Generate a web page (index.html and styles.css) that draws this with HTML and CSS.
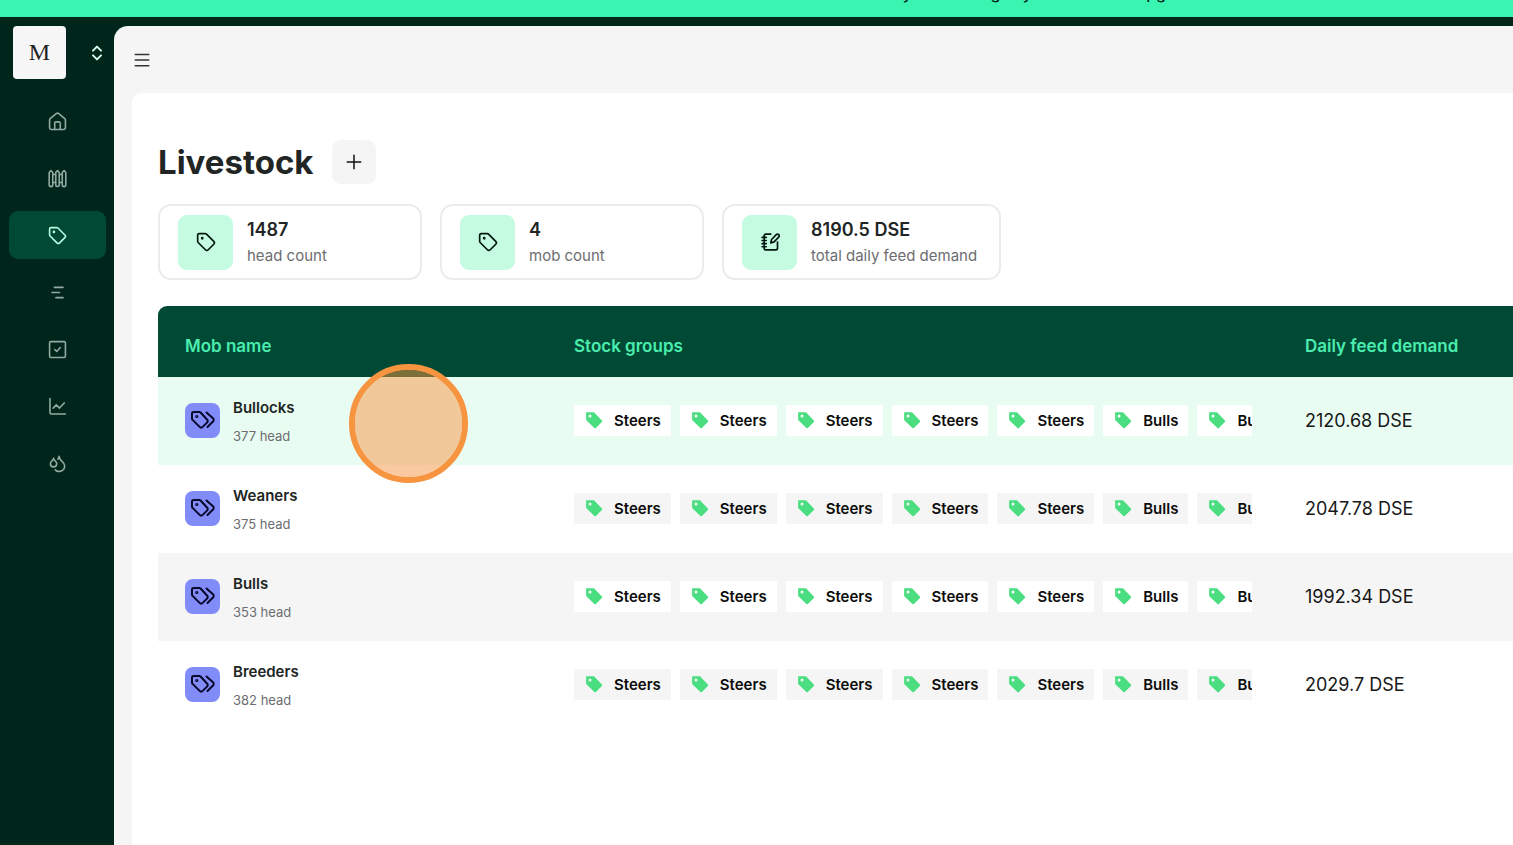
FILE: index.html
```html
<!DOCTYPE html>
<html lang="en">
<head>
<meta charset="utf-8">
<meta name="viewport" content="width=device-width, initial-scale=1">
<title>Livestock</title>
<link rel="stylesheet" href="styles.css">
</head>
<body>
<svg class="sprite" aria-hidden="true">
  <symbol id="i-home" viewBox="0 0 24 24"><path d="M2 10a2 2 0 0 1 .8-1.600l8-6.600a2 2 0 0 1 2.400 0l8 6.600a2 2 0 0 1 .8 1.600V20a2 2 0 0 1-2 2H4a2 2 0 0 1-2-2z"/><path d="M8.500 22v-8a1.500 1.500 0 0 1 1.500-1.500h4a1.500 1.500 0 0 1 1.500 1.500v8"/></symbol>
  <symbol id="i-fence" viewBox="0 0 24 24"><path d="M1.500 4.500L3.700 2 6 4.500V20a2 2 0 0 1-4.500 0zM9.800 4.500L12 2l2.200 2.500V20a2 2 0 0 1-4.400 0zM18 4.500L20.300 2l2.200 2.500V20a2 2 0 0 1-4.500 0zM6 7h3.800M14.200 7H18M6 17h3.800M14.200 17H18"/></symbol>
  <symbol id="i-tag" viewBox="0 0 24 24"><path d="M12.586 2.586A2 2 0 0 0 11.172 2H4a2 2 0 0 0-2 2v7.172a2 2 0 0 0 .586 1.414l8.704 8.704a2.426 2.426 0 0 0 3.420 0l6.580-6.580a2.426 2.426 0 0 0 0-3.420z"/><circle cx="7.500" cy="7.500" r=".7"/></symbol>
  <symbol id="i-tags" viewBox="0 0 26 26"><path d="M10.600 5.500A2 2 0 0 0 9.200 5H3.500A1.500 1.500 0 0 0 2 6.500v5a2 2 0 0 0 .6 1.400l7 7a2.200 2.200 0 0 0 3.100 0l4.300-4.300a2.200 2.200 0 0 0 0-3.100zM16.500 5.500l6.500 5.800a2.200 2.200 0 0 1 0 3.200l-5.500 5.500"/><circle cx="6.800" cy="9.500" r=".6"/></symbol>
  <symbol id="i-tag-solid" viewBox="0 0 24 24"><path fill-rule="evenodd" d="M1.500 1.500H12L22.500 12.500a1.500 1.500 0 0 1 0 2L14.500 22.500a1.500 1.500 0 0 1-2 0L1.500 12zM6.700 4.800a2 2 0 1 0 0 4 2 2 0 0 0 0-4z"/></symbol>
  <symbol id="i-gantt" viewBox="0 0 24 24"><path d="M8 5.500h11M5 12h9.500M10 18.500h9"/></symbol>
  <symbol id="i-check" viewBox="0 0 24 24"><rect x="2" y="2" width="20" height="20" rx="1.500"/><path d="M8.500 12l2.500 2.500 4.500-5"/></symbol>
  <symbol id="i-chart" viewBox="0 0 24 24"><path d="M2.500 2v18a1.500 1.500 0 0 0 1.500 1.500h18M6.500 14l4-4 4 4 6-6.500"/></symbol>
  <symbol id="i-drops" viewBox="0 0 24 24"><path d="M7 16.300c2.200 0 4-1.830 4-4.050 0-1.160-.57-2.260-1.710-3.190S7.290 6.750 7 5.300c-.290 1.450-1.140 2.840-2.290 3.760S3 11.100 3 12.250c0 2.220 1.800 4.050 4 4.050z"/><path d="M12.560 6.600A10.970 10.970 0 0 0 14 3.020c.5 2.500 2 4.900 4 6.500s3 3.500 3 5.500a6.980 6.980 0 0 1-11.910 4.970"/></symbol>
  <symbol id="i-notebook" viewBox="0 0 24 24"><path d="M13 2.500H7a2 2 0 0 0-2 2v15a2 2 0 0 0 2 2h12a2 2 0 0 0 2-2V12M2.500 6.500h5M2.500 10.200h5M2.500 14h5M2.500 17.700h5"/><path d="M19.500 3.200a2 2 0 0 1 2.900 2.900l-5.500 5.700-4 1.200 1-4z"/></symbol>
  <symbol id="i-sort" viewBox="0 0 24 24"><path d="M6 8.500l6-6 6 6M6 15.500l6 6 6-6"/></symbol>
  <symbol id="i-menu" viewBox="0 0 24 24"><path d="M3 4.500h18M3 12h18M3 19.500h18"/></symbol>
  <symbol id="i-plus" viewBox="0 0 24 24"><path d="M12 3v18M3 12h18"/></symbol>
</svg>

<div class="banner">You have 14 days remaining in your free trial. Upgrade now</div>

<div class="app">
  <aside class="sidebar">
    <button class="switcher" type="button" aria-label="Switch farm">
      <span class="avatar">M</span>
      <svg class="icon sort"><use href="#i-sort"/></svg>
    </button>
    <nav class="nav" aria-label="Main">
      <a href="#home" aria-label="Home"><svg class="icon"><use href="#i-home"/></svg></a>
      <a href="#paddocks" aria-label="Paddocks"><svg class="icon"><use href="#i-fence"/></svg></a>
      <a class="active" href="#livestock" aria-label="Livestock" aria-current="page"><svg class="icon"><use href="#i-tag"/></svg></a>
      <a href="#planner" aria-label="Planner"><svg class="icon"><use href="#i-gantt"/></svg></a>
      <a href="#tasks" aria-label="Tasks"><svg class="icon"><use href="#i-check"/></svg></a>
      <a href="#reports" aria-label="Reports"><svg class="icon"><use href="#i-chart"/></svg></a>
      <a href="#rainfall" aria-label="Rainfall"><svg class="icon"><use href="#i-drops"/></svg></a>
    </nav>
  </aside>

  <div class="shell">
    <header class="topbar">
      <button class="menu" type="button" aria-label="Toggle menu"><svg class="icon"><use href="#i-menu"/></svg></button>
    </header>
    <main class="panel">
      <div class="heading">
        <h1>Livestock</h1>
        <button class="add" type="button" aria-label="Add mob"><svg class="icon"><use href="#i-plus"/></svg></button>
      </div>

      <section class="stats" aria-label="Summary">
        <div class="stat">
          <span class="stat-icon"><svg class="icon"><use href="#i-tag"/></svg></span>
          <div><strong>1487</strong><span>head count</span></div>
        </div>
        <div class="stat">
          <span class="stat-icon"><svg class="icon"><use href="#i-tag"/></svg></span>
          <div><strong>4</strong><span>mob count</span></div>
        </div>
        <div class="stat">
          <span class="stat-icon"><svg class="icon"><use href="#i-notebook"/></svg></span>
          <div><strong>8190.5 DSE</strong><span>total daily feed demand</span></div>
        </div>
      </section>

      <table class="mobs">
        <colgroup><col class="col-name"><col class="col-groups"><col></colgroup>
        <thead>
          <tr><th scope="col">Mob name</th><th scope="col">Stock groups</th><th scope="col">Daily feed demand</th></tr>
        </thead>
        <tbody id="mob-rows"></tbody>
      </table>
      <span class="pointer" aria-hidden="true"></span>
    </main>
  </div>
</div>
<script src="app.js"></script>
</body>
</html>
```
FILE: app.js
```js
const groups = ["Steers", "Steers", "Steers", "Steers", "Steers", "Bulls", "Bulls"];
const mobs = [
  { name: "Bullocks", head: 377, demand: "2120.68", hover: true },
  { name: "Weaners", head: 375, demand: "2047.78" },
  { name: "Bulls", head: 353, demand: "1992.34" },
  { name: "Breeders", head: 382, demand: "2029.7" }
];

const chips = groups
  .map(g => `<li class="chip"><svg><use href="#i-tag-solid"/></svg>${g}</li>`)
  .join("");

document.getElementById("mob-rows").innerHTML = mobs.map(m => `
  <tr${m.hover ? ' class="highlight"' : ""}>
    <td><div class="mob">
      <span class="mob-icon"><svg class="icon"><use href="#i-tags"/></svg></span>
      <div><strong>${m.name}</strong><span>${m.head} head</span></div>
    </div></td>
    <td><ul class="chips">${chips}</ul></td>
    <td class="demand">${m.demand} DSE</td>
  </tr>`).join("");
```
FILE: styles.css
```css
* { box-sizing: border-box; }

body {
  margin: 0;
  min-height: 100vh;
  display: flex;
  flex-direction: column;
  overflow: hidden;
  background: #00261b;
  color: #212524;
  font-family: Inter, "Liberation Sans", sans-serif;
}

button {
  border: 0;
  padding: 0;
  background: none;
  color: inherit;
  font: inherit;
  cursor: pointer;
}

.sprite { display: none; }

.icon {
  display: block;
  width: 20px;
  height: 20px;
  fill: none;
  stroke: currentColor;
  stroke-width: 2;
  stroke-linecap: round;
  stroke-linejoin: round;
}

.banner {
  display: flex;
  flex: none;
  align-items: flex-end;
  justify-content: flex-end;
  height: 17px;
  padding: 0 276px 14px 0;
  overflow: hidden;
  background: #3af5b1;
  color: #00261b;
  font-size: 16px;
  font-weight: 500;
  line-height: 20px;
  white-space: nowrap;
}

.app {
  display: flex;
  flex: 1;
  padding-top: 9px;
}

.sidebar {
  flex: none;
  width: 114px;
  padding: 0 8px 0 9px;
}

.switcher {
  display: flex;
  align-items: center;
  justify-content: space-between;
  width: 100%;
  padding: 0 1px 0 4px;
  color: #d9fbec;
}

.avatar {
  display: grid;
  place-items: center;
  width: 53px;
  height: 53px;
  border-radius: 4px;
  background: #f6f6f6;
  color: #212121;
  font-family: "Liberation Serif", serif;
  font-size: 24px;
}

.sort { width: 16px; height: 16px; stroke-width: 3; }

.nav {
  display: flex;
  flex-direction: column;
  justify-content: space-between;
  height: 391px;
  margin-top: 18px;
}

.nav a {
  display: grid;
  place-items: center;
  height: 48px;
  border-radius: 9px;
  color: #93aaa2;
}

.nav .icon { width: 19px; height: 19px; }

.nav .active {
  background: #004a35;
  color: #b9fbe0;
}

.shell {
  display: flex;
  flex: 1;
  flex-direction: column;
  min-width: 0;
  border-top-left-radius: 14px;
  background: #f5f5f5;
}

.topbar {
  display: flex;
  align-items: center;
  height: 67px;
  padding-left: 19px;
}

.menu .icon { width: 18px; height: 18px; color: #303432; }

.panel {
  position: relative;
  flex: 1;
  margin-left: 18px;
  padding: 47px 0 0 26px;
  border-top-left-radius: 9px;
  background: #fff;
}

.heading {
  display: flex;
  align-items: center;
  gap: 18px;
}

h1 {
  margin: 0;
  font-size: 33px;
  font-weight: 700;
  line-height: 44px;
}

.add {
  display: grid;
  place-items: center;
  width: 44px;
  height: 44px;
  border-radius: 9px;
  background: #f5f5f5;
  color: #111;
}

.add .icon { width: 18px; height: 18px; }

.stats {
  display: flex;
  gap: 18px;
  margin: 20px 0 26px;
}

.stat {
  display: flex;
  align-items: center;
  gap: 14px;
  min-width: 264px;
  height: 76px;
  padding: 0 22px 0 18px;
  border: 2px solid #ebebeb;
  border-radius: 13px;
}

.stat-icon {
  display: grid;
  place-items: center;
  width: 55px;
  height: 55px;
  border-radius: 9px;
  background: #c5fbe1;
  color: #00170f;
}

.stat-icon + div { padding-top: 2px; }

.stat strong, .stat div span {
  display: block;
  line-height: 26px;
}

.stat strong { font-size: 18px; font-weight: 600; }
.stat div span { color: #6d6d70; font-size: 15px; }

.mobs {
  width: 100%;
  table-layout: fixed;
  border-collapse: collapse;
}

.col-name { width: 389px; }
.col-groups { width: 731px; }

th {
  height: 71px;
  padding: 8px 27px 0;
  background: #004a35;
  color: #4aedae;
  font-size: 17px;
  font-weight: 600;
  text-align: left;
  white-space: nowrap;
}

th:first-child { border-top-left-radius: 9px; }

td {
  height: 88px;
  padding: 0 26px 2px 27px;
}

tbody tr:nth-child(odd) { background: #f5f5f5; }
tbody .highlight:nth-child(odd) { background: #e9fcf2; }

.mob {
  display: flex;
  align-items: center;
  gap: 13px;
}

.mob-icon {
  display: grid;
  place-items: center;
  width: 35px;
  height: 35px;
  border-radius: 8px;
  background: #818cf8;
  color: #08092b;
}

.mob-icon .icon { width: 26px; height: 26px; }
.mob-icon + div { padding-top: 4px; }

.mob strong, .mob div span {
  display: block;
  line-height: 28px;
}

.mob strong { font-size: 15px; font-weight: 600; }
.mob div span { color: #6d6d70; font-size: 13px; }

.chips {
  display: flex;
  gap: 9px;
  margin: 0;
  padding: 0;
  overflow: hidden;
  list-style: none;
}

.chip {
  display: flex;
  flex: none;
  align-items: center;
  gap: 11px;
  height: 31px;
  padding: 0 10px 0 11px;
  background: #fff;
  color: #0c0c0c;
  font-size: 15px;
  font-weight: 600;
}

.chip svg { width: 18px; height: 18px; fill: #4ade80; }

tbody tr:nth-child(even) .chip { background: #f5f5f5; }

.demand {
  color: #171717;
  font-size: 18px;
  white-space: nowrap;
}

/* Click marker floating over the first row */
.pointer {
  position: absolute;
  top: 271px;
  left: 217px;
  width: 119px;
  height: 119px;
  border: 6px solid #f79440;
  border-radius: 50%;
  background: rgba(247, 148, 64, .5);
  background-clip: padding-box;
  pointer-events: none;
}
```
